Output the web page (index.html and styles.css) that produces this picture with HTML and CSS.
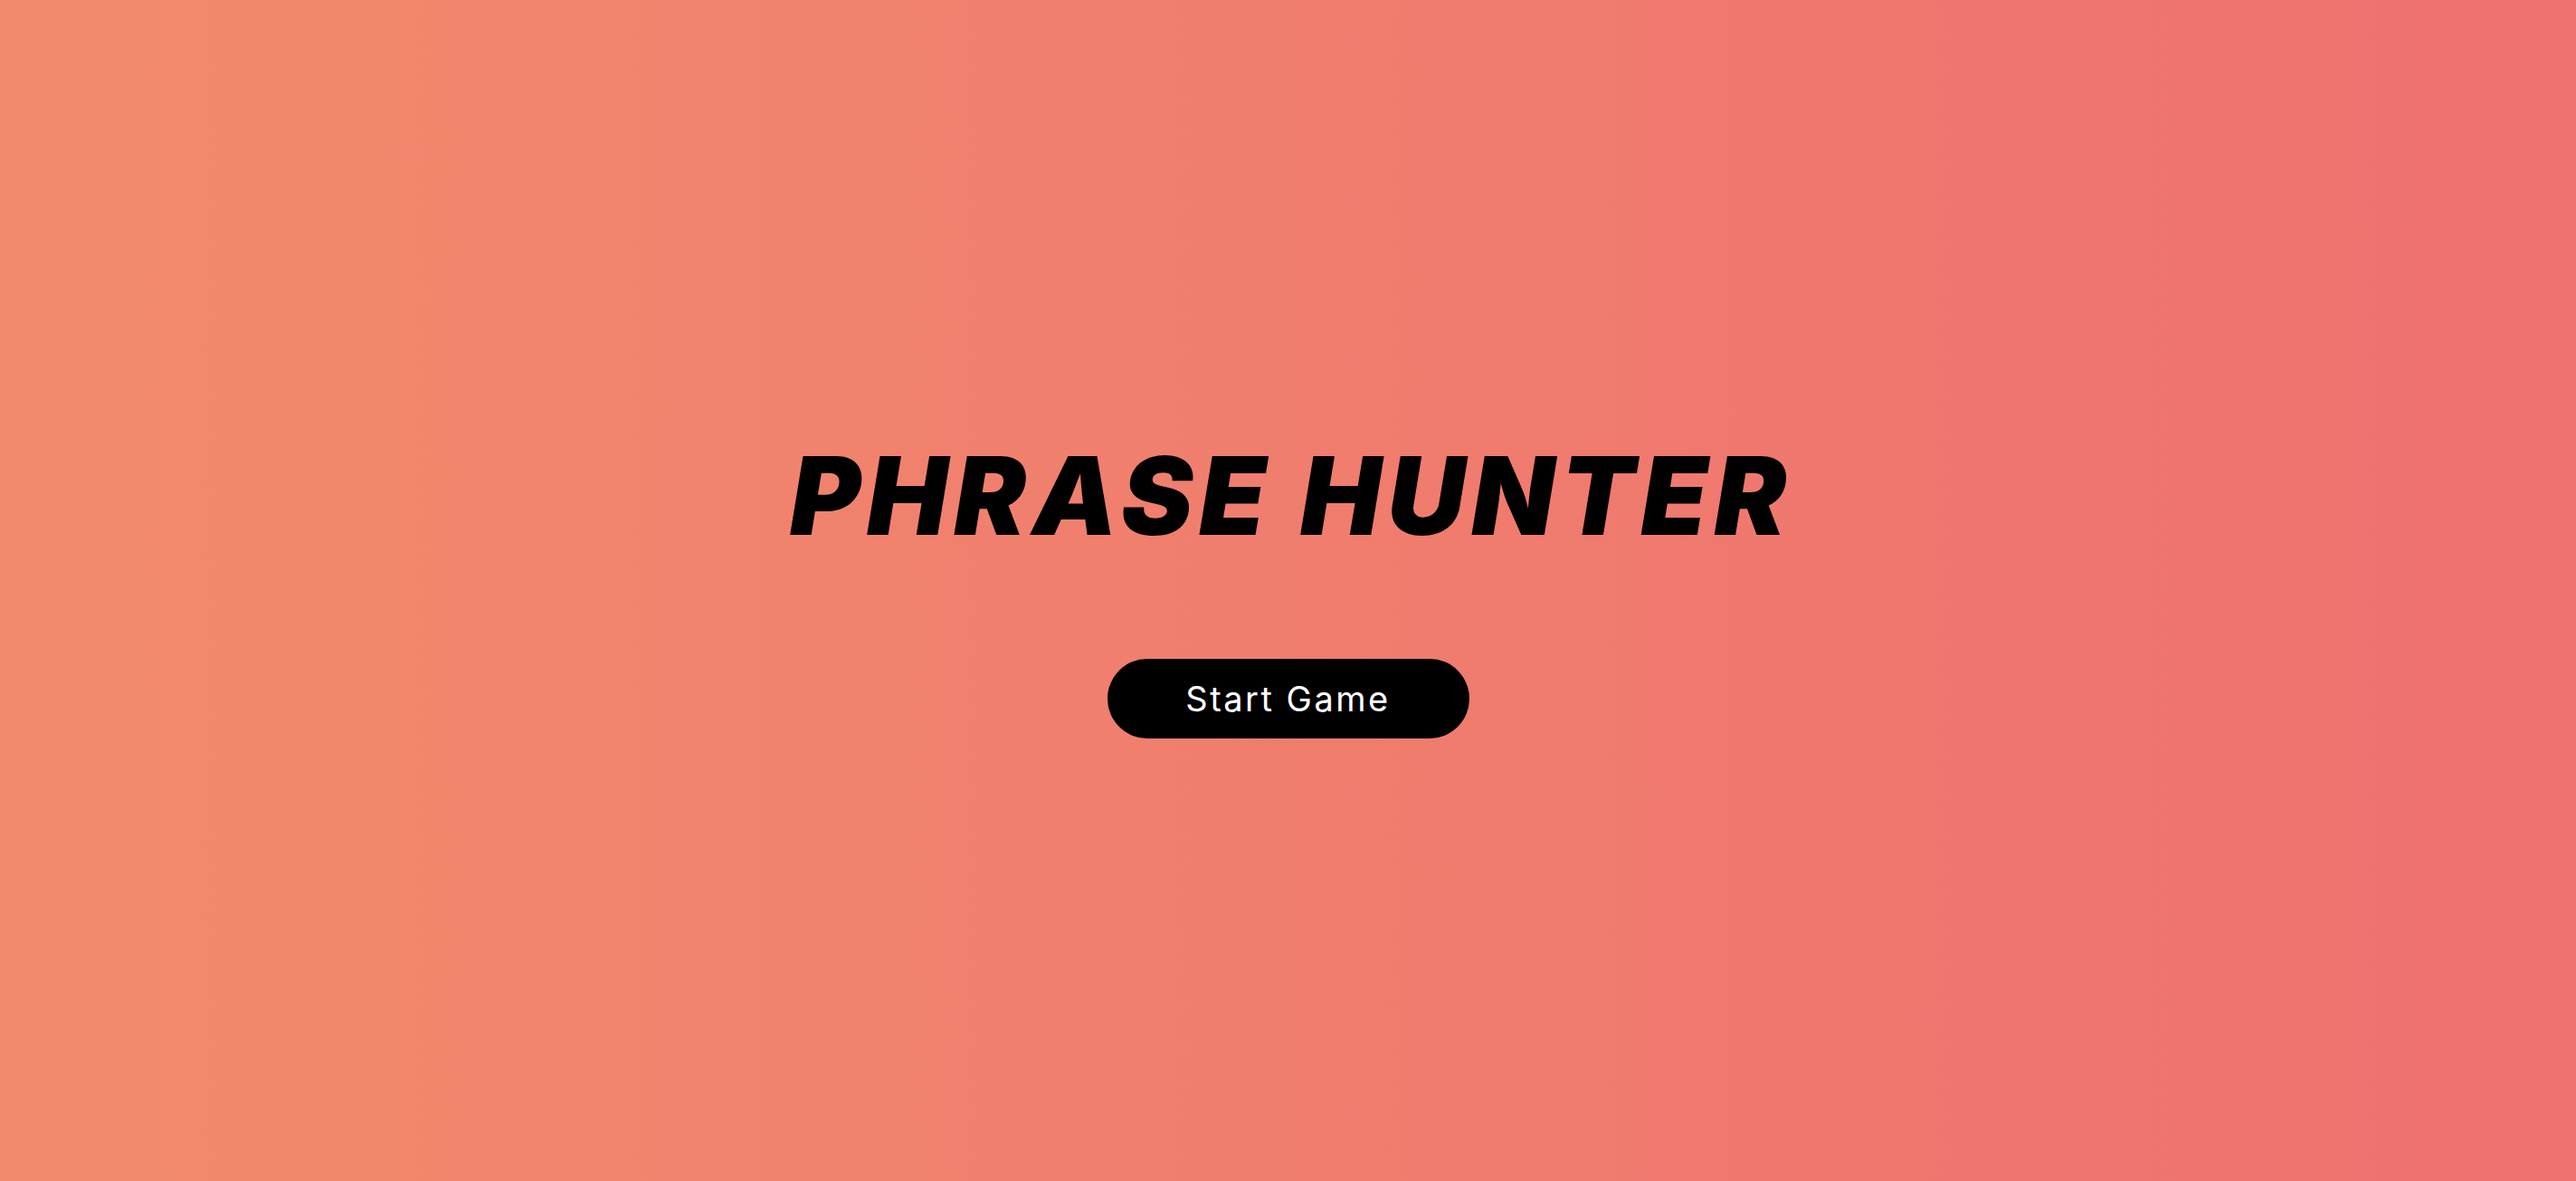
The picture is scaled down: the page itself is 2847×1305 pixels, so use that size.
FILE: index.html
```html
<!DOCTYPE html>
<html lang="en">
<head>
<meta charset="utf-8">
<title>Phrase Hunter</title>
<link rel="stylesheet" href="styles.css">
</head>
<body>
<main class="overlay">
  <h1 class="title">Phrase Hunter</h1>
  <button class="btn-reset" type="button">Start Game</button>
</main>
</body>
</html>
```
FILE: styles.css
```css
html, body {
  margin: 0;
  padding: 0;
  height: 100%;
}
body {
  background: linear-gradient(to right, #f28b6d, #ee706f);
  font-family: "Inter", "Liberation Sans", sans-serif;
}
.overlay {
  height: 100vh;
  display: flex;
  flex-direction: column;
  align-items: center;
  justify-content: center;
  padding-top: 0;
  box-sizing: border-box;
}
.title {
  margin: 0;
  font-family: "Inter", sans-serif;
  font-weight: 900;
  font-style: italic;
  font-size: 119px;
  line-height: 1;
  text-transform: uppercase;
  color: #000;
  letter-spacing: 7px;
  text-indent: 7px;
}
.btn-reset {
  margin-top: 120px;
  width: 400px;
  height: 88px;
  border: none;
  border-radius: 44px;
  background: #000;
  color: #fff;
  font-family: "Inter", sans-serif;
  font-weight: 400;
  font-size: 38px;
  letter-spacing: 2.5px;
  cursor: pointer;
  padding: 0;
}
```
